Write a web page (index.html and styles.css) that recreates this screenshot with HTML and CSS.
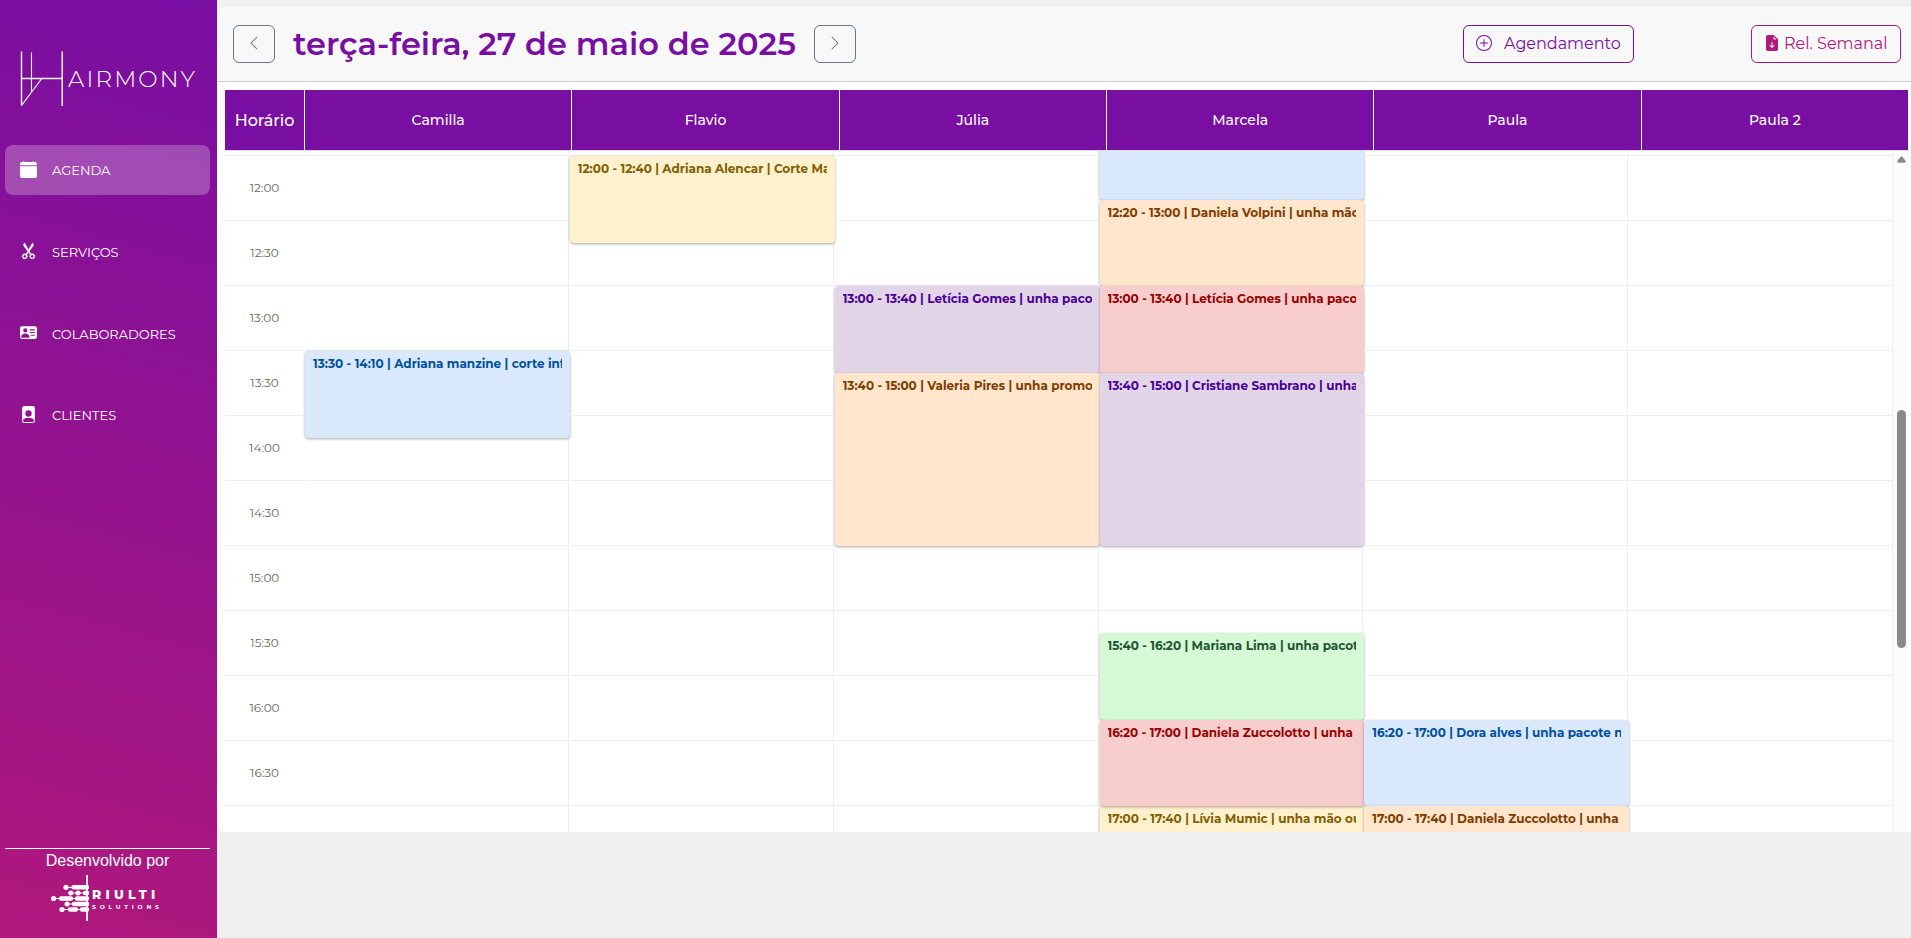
FILE: index.html
```html
<!DOCTYPE html>
<html lang="pt-BR">
<head>
<meta charset="utf-8">
<title>Hairmony - Agenda</title>
<link rel="stylesheet" href="styles.css">
</head>
<body>
<div class="app">
  <aside class="sidebar">
    <div class="brand">
      <svg class="brand-mark" width="44" height="56" viewBox="0 0 44 56" fill="none" stroke="#fff">
        <path d="M1.5 0.5V54.5M42.2 0.5V55M1.5 27.5H42.2" stroke-width="1.4"/>
        <path d="M11.5 1.5V41" stroke-width="1.1"/>
        <path d="M1.5 54.5L21.8 27.5" stroke-width="1.2"/>
      </svg>
      <span class="brand-name">AIRMONY</span>
    </div>
    <nav class="menu">
      <a class="menu-item active"><svg class="icon" viewBox="0 0 16 16"><path d="M3.5 0a.5.5 0 0 1 .5.5V1h8V.5a.5.5 0 0 1 1 0V1h1a2 2 0 0 1 2 2v11a2 2 0 0 1-2 2H2a2 2 0 0 1-2-2V5h16V4H0V3a2 2 0 0 1 2-2h1V.5a.5.5 0 0 1 .5-.5"/></svg><span>AGENDA</span></a>
      <a class="menu-item"><svg class="icon" viewBox="0 0 16 16"><path stroke="#fff" stroke-width=".35" d="M3.5 3.5c-.614-.884-.074-1.962.858-2.5L8 7.226 11.642 1c.932.538 1.472 1.616.858 2.5L8.81 8.61l1.556 2.661a2.5 2.5 0 1 1-.794.637L8 9.73l-1.572 2.177a2.5 2.5 0 1 1-.794-.637L7.19 8.61zm2.5 10a1.5 1.5 0 1 0-3 0 1.5 1.5 0 0 0 3 0m7 0a1.5 1.5 0 1 0-3 0 1.5 1.5 0 0 0 3 0"/></svg><span>SERVIÇOS</span></a>
      <a class="menu-item"><svg class="icon" viewBox="0 0 16 16"><path d="M0 4a2 2 0 0 1 2-2h12a2 2 0 0 1 2 2v8a2 2 0 0 1-2 2H2a2 2 0 0 1-2-2zm9 1.5a.5.5 0 0 0 .5.5h4a.5.5 0 0 0 0-1h-4a.5.5 0 0 0-.5.5M9 8a.5.5 0 0 0 .5.5h4a.5.5 0 0 0 0-1h-4A.5.5 0 0 0 9 8m1 2.5a.5.5 0 0 0 .5.5h3a.5.5 0 0 0 0-1h-3a.5.5 0 0 0-.5.5m-1 2C9 10.567 7.21 9 5 9c-2.086 0-3.8 1.398-3.984 3.181A1 1 0 0 0 2 13h6.96q.04-.245.04-.5M7 6a2 2 0 1 0-4 0 2 2 0 0 0 4 0"/></svg><span>COLABORADORES</span></a>
      <a class="menu-item"><svg class="icon" viewBox="0 0 16 16"><path d="M12 0H4a2 2 0 0 0-2 2v12a2 2 0 0 0 2 2h8a2 2 0 0 0 2-2V2a2 2 0 0 0-2-2m-1 7a3 3 0 1 1-6 0 3 3 0 0 1 6 0m-3 4c2.623 0 4.146.826 5 1.755V14a1 1 0 0 1-1 1H4a1 1 0 0 1-1-1v-1.245C3.854 11.825 5.377 11 8 11"/></svg><span>CLIENTES</span></a>
    </nav>
    <footer class="credits">
      <span class="credits-label">Desenvolvido por</span>
      <div class="vendor">
        <svg width="38" height="46" viewBox="0 0 38 46" fill="#fff" stroke="#fff">
          <g stroke="none">
            <circle cx="15" cy="12.3" r="2.6"/><circle cx="19.7" cy="18" r="2.5"/><circle cx="27" cy="18" r="2.5"/>
            <circle cx="2.6" cy="23.5" r="2.6"/><circle cx="16" cy="29" r="2.5"/><circle cx="11" cy="34.5" r="2.6"/>
          </g>
          <path d="M22.5 12.3H36M34 18H36M10 23.5H20M26 23.5H36M23 29H36M19 34.5H25M31 34.5H36" stroke-width="4.4" stroke-linecap="round"/>
          <path d="M15 12.3H36M19.7 18H36M2 23.5H36M16 29H36M11 34.5H36" stroke-width="1"/>
          <path d="M36 0V46" stroke-width="1.8"/>
        </svg>
        <div class="vendor-text"><span class="vendor-name">RIULTI</span><span class="vendor-sub">SOLUTIONS</span></div>
      </div>
    </footer>
  </aside>

  <main class="content">
    <header class="toolbar">
      <button class="btn nav-btn"><svg width="16" height="16" viewBox="0 0 16 16"><path d="M11.354 1.646a.5.5 0 0 1 0 .708L5.707 8l5.647 5.646a.5.5 0 0 1-.708.708l-6-6a.5.5 0 0 1 0-.708l6-6a.5.5 0 0 1 .708 0"/></svg></button>
      <h1 class="title">terça-feira, 27 de maio de 2025</h1>
      <button class="btn nav-btn"><svg width="16" height="16" viewBox="0 0 16 16"><path d="M4.646 1.646a.5.5 0 0 1 .708 0l6 6a.5.5 0 0 1 0 .708l-6 6a.5.5 0 0 1-.708-.708L10.293 8 4.646 2.354a.5.5 0 0 1 0-.708"/></svg></button>
      <button class="btn add-btn"><svg width="16" height="16" viewBox="0 0 16 16"><path d="M8 15A7 7 0 1 1 8 1a7 7 0 0 1 0 14m0 1A8 8 0 1 0 8 0a8 8 0 0 0 0 16"/><path d="M8 4a.5.5 0 0 1 .5.5v3h3a.5.5 0 0 1 0 1h-3v3a.5.5 0 0 1-1 0v-3h-3a.5.5 0 0 1 0-1h3v-3A.5.5 0 0 1 8 4"/></svg><span>Agendamento</span></button>
      <button class="btn report-btn"><svg width="16" height="16" viewBox="0 0 16 16"><path d="M9.293 0H4a2 2 0 0 0-2 2v12a2 2 0 0 0 2 2h8a2 2 0 0 0 2-2V4.707A1 1 0 0 0 13.707 4L10 .293A1 1 0 0 0 9.293 0M9.5 3.5v-2l3 3h-2a1 1 0 0 1-1-1m-1 4v3.793l1.146-1.147a.5.5 0 0 1 .708.708l-2 2a.5.5 0 0 1-.708 0l-2-2a.5.5 0 0 1 .708-.708L7.5 11.293V7.5a.5.5 0 0 1 1 0"/></svg><span>Rel. Semanal</span></button>
    </header>

    <section class="schedule">
      <div class="schedule-head">
        <div class="head-hour">Horário</div>
        <div>Camilla</div><div>Flavio</div><div>Júlia</div><div>Marcela</div><div>Paula</div><div>Paula 2</div>
      </div>
      <div class="schedule-body">
        <div class="hours">
          <span>12:00</span><span>12:30</span><span>13:00</span><span>13:30</span><span>14:00</span><span>14:30</span><span>15:00</span><span>15:30</span><span>16:00</span><span>16:30</span><span></span>
        </div>
        <div class="lane">
          <div class="event blue" style="grid-row:10/14">13:30 - 14:10 | Adriana manzine | corte infantil</div>
        </div>
        <div class="lane">
          <div class="event yellow" style="grid-row:1/5">12:00 - 12:40 | Adriana Alencar | Corte Masculino</div>
        </div>
        <div class="lane">
          <div class="event purple" style="grid-row:7/11">13:00 - 13:40 | Letícia Gomes | unha pacote</div>
          <div class="event orange" style="grid-row:11/19">13:40 - 15:00 | Valeria Pires | unha promoção</div>
        </div>
        <div class="lane">
          <div class="event blue from-above" style="grid-row:1/3"></div>
          <div class="event orange" style="grid-row:3/7">12:20 - 13:00 | Daniela Volpini | unha mão</div>
          <div class="event red" style="grid-row:7/11">13:00 - 13:40 | Letícia Gomes | unha pacote</div>
          <div class="event purple" style="grid-row:11/19">13:40 - 15:00 | Cristiane Sambrano | unha</div>
          <div class="event green" style="grid-row:23/27">15:40 - 16:20 | Mariana Lima | unha pacote</div>
          <div class="event yellow" style="grid-row:31/35">17:00 - 17:40 | Lívia Mumic | unha mão ou pé</div>
          <div class="event red" style="grid-row:27/31">16:20 - 17:00 | Daniela Zuccolotto | unha</div>
        </div>
        <div class="lane">
          <div class="event blue" style="grid-row:27/31">16:20 - 17:00 | Dora alves | unha pacote na promoção</div>
          <div class="event orange" style="grid-row:31/35">17:00 - 17:40 | Daniela Zuccolotto | unha</div>
        </div>
        <div class="lane"></div>
        <div class="scrollbar">
          <svg width="9" height="7" viewBox="0 0 9 7"><path d="M4.5 0.3Q5 0.3 5.6 1L8.7 5Q9 6.8 7.8 6.8H1.2Q0 6.8 0.3 5L3.4 1Q4 0.3 4.5 0.3Z" fill="#8b8b8b"/></svg>
          <div class="thumb"></div>
        </div>
      </div>
    </section>
  </main>
</div>
</body>
</html>
```
FILE: styles.css
```css
* { box-sizing: border-box; }

body {
  margin: 0;
  background: #f0f0f0;
  font-family: "Montserrat", "Inter", sans-serif;
  overflow: hidden;
}

.app { display: flex; height: 938px; }

/* Sidebar */
.sidebar {
  width: 217px;
  flex: none;
  padding: 0 7px 0 5px;
  display: flex;
  flex-direction: column;
  color: #fff;
  background: linear-gradient(195deg, #780ea2 0%, #b0187c 100%);
}

.brand {
  display: flex;
  align-items: center;
  gap: 4px;
  height: 56px;
  margin: 51px 0 38px 15px;
}

.brand-name {
  font-size: 23px;
  font-weight: 300;
  letter-spacing: 2.2px;
  white-space: nowrap;
}

.menu { display: flex; flex-direction: column; gap: 31.8px; }

.menu-item {
  display: flex;
  align-items: center;
  gap: 15px;
  height: 50px;
  padding-left: 15px;
  border-radius: 8px;
  font-size: 13px;
}

.menu-item.active { background: rgba(255, 255, 255, 0.25); }

.icon { width: 17px; height: 17px; fill: #fff; margin-bottom: 2px; }

.credits {
  margin-top: auto;
  height: 90px;
  border-top: 1px solid #fff;
  display: flex;
  flex-direction: column;
  align-items: center;
}

.credits-label {
  margin-top: 3px;
  font: 16px/18px "Liberation Sans", Arial, sans-serif;
}

.vendor { display: flex; gap: 3px; margin-top: 5px; align-self: flex-start; padding-left: 46px; }
.vendor-text { display: flex; flex-direction: column; padding-top: 13px; }

.vendor-name {
  font-size: 12.5px;
  line-height: 14px;
  font-weight: 800;
  letter-spacing: 4.2px;
}

.vendor-sub {
  font-size: 6px;
  line-height: 8px;
  margin-top: 1px;
  font-weight: 700;
  letter-spacing: 3.8px;
}

/* Toolbar */
.content { flex: 1; min-width: 0; padding-top: 7px; }

.toolbar {
  display: flex;
  align-items: center;
  height: 75px;
  padding: 0 10px 0 16px;
  background: #f8f8f8;
  border-bottom: 1px solid #ccc;
  border-top-left-radius: 8px;
}

.title {
  width: 502px;
  margin: 0 19px 2px 18px;
  font-size: 32px;
  font-weight: 600;
  color: #780ea2;
  white-space: nowrap;
}

.btn {
  display: flex;
  align-items: center;
  height: 38px;
  padding: 0 12px;
  border: 1px solid;
  border-radius: 6px;
  background: none;
  font: 16px "Montserrat", "Inter", sans-serif;
  white-space: nowrap;
}

.btn svg { fill: currentColor; flex: none; margin-bottom: 2px; }
.btn span { margin-bottom: 1px; }

.nav-btn { width: 42px; padding: 0; justify-content: center; color: #6c757d; }

.add-btn {
  width: 171px;
  margin-left: auto;
  gap: 12px;
  color: #780ea2;
}

.report-btn {
  width: 150px;
  margin-left: 117px;
  gap: 4px;
  color: #b0187c;
}

/* Schedule */
.schedule {
  height: 750px;
  padding: 8px 3px 0 8px;
  background: #fff;
  border-bottom-left-radius: 8px;
}

.schedule-head {
  display: grid;
  grid-template-columns: 79px repeat(6, 1fr);
  gap: 1px;
  height: 61px;
  border-bottom: 1px solid #ddd;
}

.schedule-head div {
  display: flex;
  align-items: center;
  justify-content: center;
  background: #780ea2;
  color: #fff;
  font-size: 14px;
  font-weight: 500;
}

.schedule-head .head-hour { font-size: 16px; }

.schedule-body {
  display: grid;
  grid-template-columns: 79px repeat(6, 1fr) 14px;
  column-gap: 1px;
  height: 681px;
  overflow: hidden;
}

.schedule-body > .scrollbar { margin-left: -1px; }

.hours, .lane {
  background: repeating-linear-gradient(#eee 0 1px, transparent 1px 65px) 0 4px no-repeat;
}

.hours { display: flex; flex-direction: column; padding-top: 5px; }

.hours span {
  flex: 0 0 65px;
  line-height: 64px;
  text-align: center;
  font-size: 12px;
  color: #666;
}

.lane {
  display: grid;
  grid-auto-rows: 21.672px;
  grid-template-columns: 100%;
  min-width: 0;
  height: 681px;
  padding-top: 5.2px;
  border-right: 1px solid #eee;
}

.event {
  margin-right: -2px;
  padding: 5px 8px 0;
  border-radius: 4px;
  box-shadow: 0 1px 3px rgba(0, 0, 0, 0.35);
  font-size: 12px;
  line-height: 16px;
  font-weight: 700;
  white-space: nowrap;
  overflow: clip;
  overflow-clip-margin: content-box;
}

.from-above { margin-top: -20px; }

.blue { background: #d9e8fb; color: #0050a0; }
.yellow { background: #fff1cd; color: #806000; }
.purple { background: #e1d5e7; color: #4b0096; }
.orange { background: #ffe6cc; color: #803c00; }
.red { background: #f8cecc; color: #990000; }
.green { background: #d5f8d5; color: #1e5631; }

.scrollbar {
  display: flex;
  flex-direction: column;
  align-items: flex-end;
  padding: 5px 2px 0 0;
  background: #fcfcfc;
}

.thumb {
  width: 9px;
  height: 238px;
  margin-top: 247px;
  border-radius: 5px;
  background: #8b8b8b;
}
```
